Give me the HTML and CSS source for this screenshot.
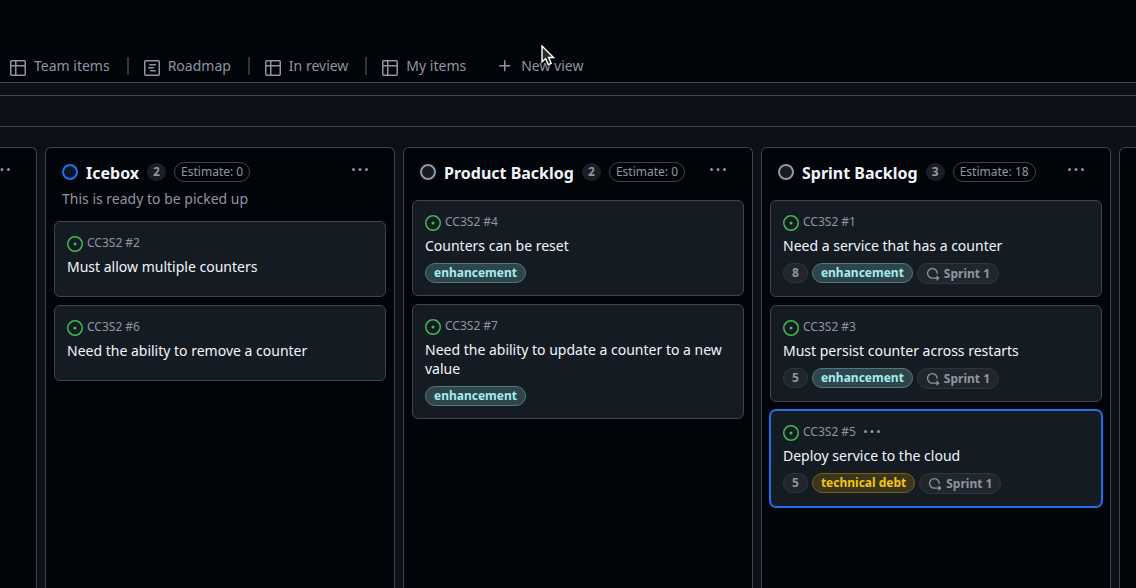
FILE: index.html
```html
<!DOCTYPE html>
<html lang="en">
<head>
<meta charset="utf-8">
<meta name="viewport" content="width=device-width, initial-scale=1">
<title>Project board</title>
<link rel="stylesheet" href="styles.css">
</head>
<body>
<svg class="sprite" aria-hidden="true">
  <symbol id="table" viewBox="0 0 16 16"><path d="M0 1.75C0 .784.784 0 1.75 0h12.5C15.216 0 16 .784 16 1.75v12.5A1.75 1.75 0 0 1 14.25 16H1.75A1.75 1.75 0 0 1 0 14.25ZM6.5 6.5v8h7.75a.25.25 0 0 0 .25-.25V6.5Zm8-1.5V1.75a.25.25 0 0 0-.25-.25H6.5V5Zm-13 1.5v7.75c0 .138.112.25.25.25H5v-8ZM5 5V1.5H1.75a.25.25 0 0 0-.25.25V5Z"/></symbol>
  <symbol id="roadmap" viewBox="0 0 16 16"><path d="M4.75 7a.75.75 0 0 0 0 1.5h4.5a.75.75 0 0 0 0-1.5h-4.5ZM5 4.75A.75.75 0 0 1 5.75 4h5.5a.75.75 0 0 1 0 1.5h-5.5A.75.75 0 0 1 5 4.75ZM6.75 10a.75.75 0 0 0 0 1.5h4.5a.75.75 0 0 0 0-1.5h-4.5Z"/><path d="M0 1.75C0 .784.784 0 1.75 0h12.5C15.216 0 16 .784 16 1.75v12.5A1.75 1.75 0 0 1 14.25 16H1.75A1.75 1.75 0 0 1 0 14.25Zm1.75-.25a.25.25 0 0 0-.25.25v12.5c0 .138.112.25.25.25h12.5a.25.25 0 0 0 .25-.25V1.75a.25.25 0 0 0-.25-.25Z"/></symbol>
  <symbol id="plus" viewBox="0 0 16 16"><path d="M7.75 2a.75.75 0 0 1 .75.75V7h4.25a.75.75 0 0 1 0 1.5H8.5v4.25a.75.75 0 0 1-1.5 0V8.5H2.75a.75.75 0 0 1 0-1.5H7V2.75A.75.75 0 0 1 7.75 2Z"/></symbol>
  <symbol id="kebab" viewBox="0 0 16 16"><path d="M8 9a1.5 1.5 0 1 0 0-3 1.5 1.5 0 0 0 0 3ZM1.5 9a1.5 1.5 0 1 0 0-3 1.5 1.5 0 0 0 0 3Zm13 0a1.5 1.5 0 1 0 0-3 1.5 1.5 0 0 0 0 3Z"/></symbol>
  <symbol id="issue" viewBox="0 0 16 16"><path d="M8 9.5a1.5 1.5 0 1 0 0-3 1.5 1.5 0 0 0 0 3Z"/><path d="M8 0a8 8 0 1 1 0 16A8 8 0 0 1 8 0ZM1.5 8a6.5 6.5 0 1 0 13 0 6.5 6.5 0 0 0-13 0Z"/></symbol>
  <symbol id="iteration" viewBox="0 0 16 16"><path d="M2.5 7.25a4.75 4.75 0 0 1 9.5 0 .75.75 0 0 0 1.5 0 6.25 6.25 0 1 0-6.25 6.25H12v2.146c0 .223.27.335.427.177l2.896-2.896a.25.25 0 0 0 0-.354l-2.896-2.896a.25.25 0 0 0-.427.177V12H7.25A4.75 4.75 0 0 1 2.5 7.25Z"/></symbol>
</svg>

<header class="views">
  <nav class="tabs" aria-label="Views">
    <a class="tab" href="#team"><svg class="icon"><use href="#table"/></svg>Team items</a>
    <a class="tab" href="#roadmap-view"><svg class="icon"><use href="#roadmap"/></svg>Roadmap</a>
    <a class="tab" href="#review"><svg class="icon"><use href="#table"/></svg>In review</a>
    <a class="tab" href="#mine"><svg class="icon"><use href="#table"/></svg>My items</a>
    <button class="new-view" type="button"><svg class="icon"><use href="#plus"/></svg>New view</button>
  </nav>
</header>
<div class="filter-bar"></div>

<main class="board">
  <section class="column column-previous" aria-label="Previous column">
    <header class="column-header">
      <div class="column-row">
        <button class="menu" type="button" aria-label="Column menu"><svg class="icon dots"><use href="#kebab"/></svg></button>
      </div>
    </header>
  </section>

  <section class="column">
    <header class="column-header">
      <div class="column-row">
        <span class="status status-blue"></span>
        <h2 class="column-title">Icebox</h2>
        <span class="count">2</span>
        <span class="estimate">Estimate: 0</span>
        <button class="menu" type="button" aria-label="Icebox menu"><svg class="icon dots"><use href="#kebab"/></svg></button>
      </div>
      <p class="description">This is ready to be picked up</p>
    </header>
    <div class="cards">
      <article class="card">
        <div class="card-head"><svg class="icon open"><use href="#issue"/></svg>CC3S2 #2</div>
        <h3 class="card-title">Must allow multiple counters</h3>
        <div class="labels"></div>
      </article>
      <article class="card">
        <div class="card-head"><svg class="icon open"><use href="#issue"/></svg>CC3S2 #6</div>
        <h3 class="card-title">Need the ability to remove a counter</h3>
        <div class="labels"></div>
      </article>
    </div>
  </section>

  <section class="column">
    <header class="column-header">
      <div class="column-row">
        <span class="status"></span>
        <h2 class="column-title">Product Backlog</h2>
        <span class="count">2</span>
        <span class="estimate">Estimate: 0</span>
        <button class="menu" type="button" aria-label="Product Backlog menu"><svg class="icon dots"><use href="#kebab"/></svg></button>
      </div>
    </header>
    <div class="cards">
      <article class="card">
        <div class="card-head"><svg class="icon open"><use href="#issue"/></svg>CC3S2 #4</div>
        <h3 class="card-title">Counters can be reset</h3>
        <div class="labels"><span class="label enhancement">enhancement</span></div>
      </article>
      <article class="card">
        <div class="card-head"><svg class="icon open"><use href="#issue"/></svg>CC3S2 #7</div>
        <h3 class="card-title">Need the ability to update a counter to a new value</h3>
        <div class="labels"><span class="label enhancement">enhancement</span></div>
      </article>
    </div>
  </section>

  <section class="column">
    <header class="column-header">
      <div class="column-row">
        <span class="status"></span>
        <h2 class="column-title">Sprint Backlog</h2>
        <span class="count">3</span>
        <span class="estimate">Estimate: 18</span>
        <button class="menu" type="button" aria-label="Sprint Backlog menu"><svg class="icon dots"><use href="#kebab"/></svg></button>
      </div>
    </header>
    <div class="cards">
      <article class="card">
        <div class="card-head"><svg class="icon open"><use href="#issue"/></svg>CC3S2 #1</div>
        <h3 class="card-title">Need a service that has a counter</h3>
        <div class="labels"><span class="label">8</span><span class="label enhancement">enhancement</span><span class="label sprint"><svg class="icon small"><use href="#iteration"/></svg>Sprint 1</span></div>
      </article>
      <article class="card">
        <div class="card-head"><svg class="icon open"><use href="#issue"/></svg>CC3S2 #3</div>
        <h3 class="card-title">Must persist counter across restarts</h3>
        <div class="labels"><span class="label">5</span><span class="label enhancement">enhancement</span><span class="label sprint"><svg class="icon small"><use href="#iteration"/></svg>Sprint 1</span></div>
      </article>
      <article class="card selected">
        <div class="card-head"><svg class="icon open"><use href="#issue"/></svg>CC3S2 #5
          <button class="card-menu" type="button" aria-label="Card menu"><svg class="icon dots"><use href="#kebab"/></svg></button>
        </div>
        <h3 class="card-title">Deploy service to the cloud</h3>
        <div class="labels"><span class="label">5</span><span class="label debt">technical debt</span><span class="label sprint"><svg class="icon small"><use href="#iteration"/></svg>Sprint 1</span></div>
      </article>
    </div>
  </section>

  <section class="column" aria-label="Next column"></section>
</main>

<svg class="pointer" viewBox="0 0 14 21" aria-hidden="true"><path d="M1 1v16l3.6-3.4 2.6 6 3-1.3-2.5-5.8h4.8Z"/></svg>
</body>
</html>
```

FILE: styles.css
```css
* {
  box-sizing: border-box;
}

body {
  margin: 0;
  height: 100vh;
  overflow: hidden;
  display: flex;
  flex-direction: column;
  background: #0d1117;
  color: #f0f6fc;
  font: 14px/19px "Noto Sans", sans-serif;
}

h2, h3, p {
  margin: 0;
}

button {
  padding: 0;
  border: 0;
  background: none;
  color: #8d96a0;
  font: inherit;
}

.sprite {
  display: none;
}

.icon {
  width: 16px;
  height: 16px;
  flex: none;
  fill: currentColor;
}

.dots {
  display: block;
}

.small {
  width: 14px;
  height: 14px;
}

.views {
  padding: 56px 0 6px 10px;
  background: #010409;
  border-bottom: 1px solid #3d444d;
}

.tabs {
  display: flex;
  line-height: 20px;
}

.tab {
  display: flex;
  align-items: flex-end;
  gap: 8px;
  padding-right: 17px;
  color: #8d96a0;
  text-decoration: none;
  white-space: nowrap;
}

.tab + .tab {
  padding-left: 17px;
  background: linear-gradient(#30363d, #30363d) left center / 2px 18px no-repeat;
}

.new-view {
  display: flex;
  align-items: center;
  gap: 8px;
  padding-left: 14px;
  line-height: 20px;
  white-space: nowrap;
}

.filter-bar {
  flex: none;
  height: 32px;
  margin: 12px 0 20px;
  border: solid #3d444d;
  border-width: 1px 0;
}

.board {
  flex: 1;
  min-height: 0;
  overflow: hidden;
  display: flex;
  gap: 8px;
}

.column {
  flex: none;
  width: 350px;
  padding: 0 8px;
  background: #010409;
  border: 1px solid #3d444d;
  border-bottom: 0;
  border-radius: 6px 6px 0 0;
}

.column-previous {
  margin-left: -313px;
}

.column-header {
  padding: 8px 18px 12px 8px;
}

.column-row {
  display: flex;
  align-items: center;
  gap: 8px;
  height: 32px;
}

.status {
  width: 16px;
  height: 16px;
  border: 2px solid #9198a1;
  border-radius: 50%;
  background: #151b23;
}

.status-blue {
  border-color: #1f6feb;
  background: #0a172b;
}

.column-title {
  padding-top: 2px;
  font-size: 16px;
  line-height: 24px;
}

.count {
  min-width: 19px;
  padding: 0 6px;
  border-radius: 9px;
  background: #1a1e25;
  color: #9198a1;
  font-size: 12px;
  font-weight: 700;
  line-height: 18px;
}

.estimate {
  padding: 0 6px;
  border: 1px solid #3d444d;
  border-radius: 10px;
  color: #8d96a0;
  font-size: 12px;
  line-height: 18px;
}

.menu {
  align-self: flex-start;
  margin: 6px 0 0 auto;
}

.description {
  color: #8d96a0;
  line-height: 21px;
}

.cards {
  display: grid;
  gap: 8px;
}

.card {
  padding: 12px;
  background: #151b23;
  border: 1px solid #3d444d;
  border-radius: 6px;
}

.selected {
  border-color: #1f6feb;
  box-shadow: 0 0 0 1px #1f6feb;
}

.card-head {
  display: flex;
  align-items: flex-end;
  gap: 4px;
  margin-bottom: 5px;
  color: #8d96a0;
  font-size: 12px;
  line-height: 18px;
}

.card-menu {
  align-self: center;
  padding-left: 4px;
}

.open {
  color: #3fb950;
}

.card-title {
  font-size: 14px;
  font-weight: 400;
}

.labels {
  display: flex;
  align-items: flex-start;
  gap: 4px;
  margin-top: 8px;
}

.label {
  padding: 0 8px;
  border: 1px solid #30363d;
  border-radius: 11px;
  background: #21262d;
  color: #8d96a0;
  font-size: 12px;
  font-weight: 700;
  line-height: 18px;
}

.sprint {
  display: flex;
  align-items: center;
  gap: 4px;
  line-height: 19px;
}

.enhancement {
  border-color: #4d7a7c;
  background: #2f444b;
  color: #a2eeef;
}

.debt {
  border-color: #76620f;
  background: #3a351c;
  color: #f5c60a;
}

.pointer {
  position: absolute;
  left: 541px;
  top: 45px;
  width: 14px;
  height: 21px;
  fill: #2b2b2b;
  stroke: #fff;
  stroke-width: 1.4;
}
```
